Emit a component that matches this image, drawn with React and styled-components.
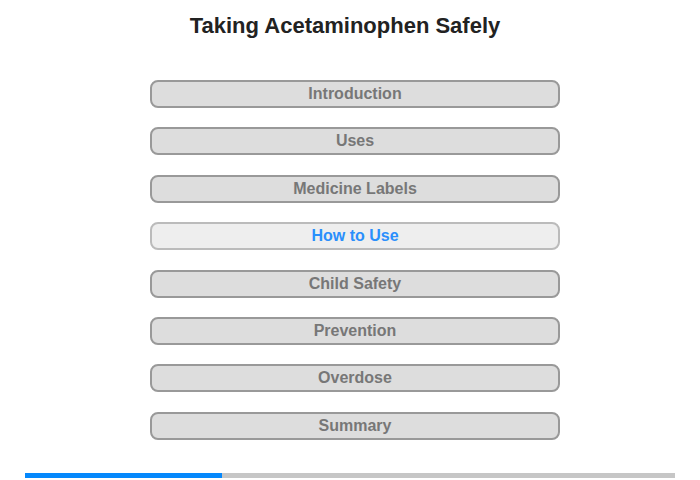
import React from "react";
import styled, { createGlobalStyle } from "styled-components";

const GlobalStyle = createGlobalStyle`
  body {
    margin: 0;
    background: #fff;
    font-family: "Liberation Sans", Arial, sans-serif;
  }
`;

const Page = styled.div`
  width: 700px;
  height: 480px;
  display: flex;
  flex-direction: column;
  align-items: center;
`;

const Title = styled.h1`
  margin: 12px 10px 0 0;
  font-size: 22px;
  font-weight: 700;
  color: #222;
  line-height: 28px;
`;

const Menu = styled.div`
  margin: 40px 0 0 10px;
  display: flex;
  flex-direction: column;
  gap: 19.4px;
`;

const MenuButton = styled.div`
  box-sizing: border-box;
  width: 410px;
  height: 28px;
  border: 2px solid ${(p) => (p.active ? "#bbb" : "#999")};
  border-radius: 8px;
  background: ${(p) => (p.active ? "#eee" : "#ddd")};
  color: ${(p) => (p.active ? "#2a8ffc" : "#777")};
  font-size: 16px;
  font-weight: 700;
  display: flex;
  align-items: center;
  justify-content: center;
`;

const Progress = styled.div`
  margin-top: auto;
  margin-bottom: 2px;
  width: 650px;
  height: 5px;
  background: #c6c6c6;
  display: flex;
`;

const ProgressFill = styled.div`
  height: 100%;
  background: #0588fc;
`;

const items = [
  "Introduction",
  "Uses",
  "Medicine Labels",
  "How to Use",
  "Child Safety",
  "Prevention",
  "Overdose",
  "Summary",
];

export default function App() {
  return (
    <>
      <GlobalStyle />
      <Page>
        <Title>Taking Acetaminophen Safely</Title>
        <Menu>
          {items.map((label) => (
            <MenuButton key={label} active={label === "How to Use"}>
              {label}
            </MenuButton>
          ))}
        </Menu>
        <Progress>
          <ProgressFill style={{ width: `${(197 / 650) * 100}%` }} />
        </Progress>
      </Page>
    </>
  );
}
